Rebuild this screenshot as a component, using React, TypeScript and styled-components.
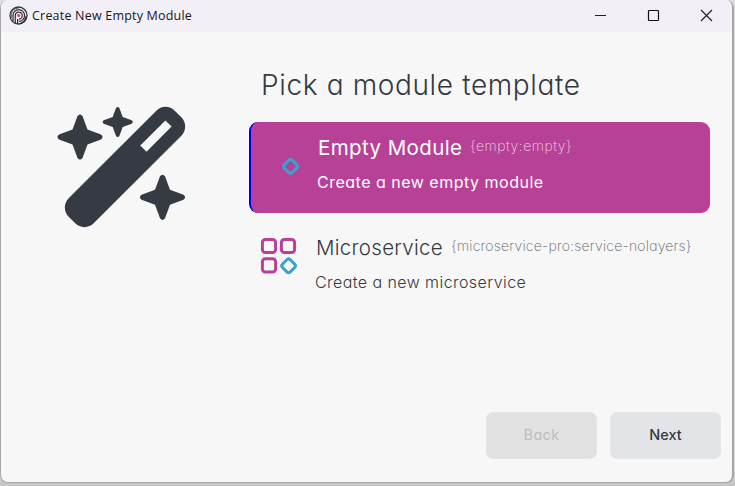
import React from "react";
import styled, { createGlobalStyle } from "styled-components";

const GlobalStyle = createGlobalStyle`
  * { box-sizing: border-box; }
  html, body { margin: 0; height: 486px; overflow: hidden; }
  body { background: #c9c9c9; font-family: Inter, "Liberation Sans", sans-serif; font-feature-settings: "cv11"; font-optical-sizing: none; }
`;

const Desktop = styled.div`
  width: 735px;
  height: 486px;
  padding: 0 1px 3px 0;
  background: linear-gradient(#dedede, #dedede 470px, #c6c6c6 482px);
`;
const Window = styled.div`
  height: 483px;
  border: 1px solid #a6a6a6;
  border-top: 0;
  border-right-width: 2px;
  border-bottom-width: 1px;
  border-radius: 8px;
  overflow: hidden;
  background: #f7f7f7;
`;
const TitleBar = styled.header`
  height: 32px;
  display: flex;
  align-items: center;
  background: #f2eff7;
  padding: 0 0 1px 8px;
  color: #17171a;
`;
const WindowTitle = styled.span`
  margin-left: 4px;
  flex: 1;
  font: 12.5px/18px "Open Sans", sans-serif;
  letter-spacing: 0.2px;
  padding-top: 1px;
  white-space: nowrap;
`;
const WindowControls = styled.div`
  display: flex;
  gap: 40px;
  padding-right: 19px;
`;
const Body = styled.main`
  height: 380px;
  display: grid;
  grid-template-columns: 248px 461px;
`;
const Illustration = styled.div`
  padding: 73px 0 0 55px;
`;
const Heading = styled.h1`
  margin: 35px 0 19px 12px;
  height: 36px;
  font-size: 28px;
  line-height: 36px;
  font-weight: 300;
  color: #343a40;
  white-space: nowrap;
  letter-spacing: 0.64px;
`;
const Option = styled.div<{ $selected?: boolean }>`
  height: 91px;
  margin-bottom: 9px;
  display: grid;
  grid-template-columns: ${p => (p.$selected ? "67px 1fr" : "65px 1fr")};
  border-left: 2px solid ${p => (p.$selected ? "#0000ff" : "transparent")};
  border-radius: 9px;
  background: ${p => (p.$selected ? "#b74196" : "transparent")};
  color: ${p => (p.$selected ? "#fff" : "#343a40")};
`;
const OptionIcon = styled.div<{ $selected?: boolean }>`
  padding: ${p => (p.$selected ? "35px 0 0 30px" : "15px 0 0 9px")};
`;
const OptionTop = styled.div`
  display: flex;
  padding-top: 12px;
  white-space: nowrap;
`;
const Name = styled.span<{ $width: number; $spacing: number; $selected?: boolean }>`
  width: ${p => p.$width}px;
  font-size: 20.5px;
  line-height: 28px;
  letter-spacing: ${p => p.$spacing}px;
  font-weight: ${p => (p.$selected ? 400 : 300)};
`;
const Code = styled.span<{ $selected?: boolean; $spacing: number }>`
  font-size: 14px;
  line-height: 24px;
  font-weight: 200;
  letter-spacing: ${p => p.$spacing}px;
  color: ${p => (p.$selected ? "#f0d3e7" : "#606468")};
`;
const Description = styled.div<{ $selected?: boolean; $spacing: number }>`
  margin: 8px 0 0 -1px;
  font-size: 16px;
  line-height: 24px;
  letter-spacing: ${p => p.$spacing}px;
  font-weight: ${p => (p.$selected ? 400 : 330)};
  white-space: nowrap;
`;
const Footer = styled.footer`
  display: flex;
  justify-content: flex-end;
  gap: 13px;
  padding-right: 11px;
`;
const Button = styled.button`
  width: 111px;
  height: 47px;
  padding: 0 0 2px;
  border: 1px solid #e5e6e9;
  border-radius: 7px;
  background: #e2e4e8;
  color: #343a40;
  font: 500 14.5px/20px Inter, sans-serif;
  font-feature-settings: "cv11";
  &:disabled { background: #e1e1e1; border-color: #e5e5e5; color: #bbbdbe; font-weight: 400; letter-spacing: 0.3px; }
`;

const AppLogo = () => (
  <svg width="19" height="19" viewBox="0 0 19 19" fill="none" stroke="#34343a" strokeWidth="1.25">
    <circle cx="9.5" cy="9.5" r="8.5" strokeWidth="1.3" />
    <path d="M4 15V9.5a5.8 5.8 0 1 1 5.8 5.8" />
    <path d="M6.3 17V9.5a3.5 3.5 0 1 1 3.5 3.5" />
    <path d="M2.3 12V8.5C3 4 6 2.2 9.5 2.2" strokeWidth=".8" />
    <path d="M8.6 17.8V13M11.5 17.3q5-1.8 5.4-7" />
    <circle cx="9.7" cy="9.4" r="1.7" fill="#d348a8" stroke="none" />
  </svg>
);

const Wand = () => (
  <svg width="132" height="124" viewBox="56 105 132 124" fill="#363b43">
    <g transform="translate(125 167) rotate(-45)">
      <rect x="-75" y="-17.7" width="150" height="35.4" rx="13" />
      <rect x="26" y="-4.4" width="35.5" height="8.8" fill="#f7f7f7" />
    </g>
    <Star x={80} y={137} scale={1} />
    <Star x={117.7} y={122} scale={0.667} />
    <Star x={162.5} y={197.3} scale={1} />
  </svg>
);
const Star = ({ x, y, scale }: { x: number; y: number; scale: number }) => (
  <path
    transform={`translate(${x} ${y}) scale(${scale})`}
    d="M-2.5-21Q0-24.2 2.5-21L7.5-7.5L21-2.5Q24.2 0 21 2.5L7.5 7.5L2.5 21Q0 24.2-2.5 21L-7.5 7.5L-21 2.5Q-24.2 0-21-2.5L-7.5-7.5Z"
  />
);
const Diamond = () => (
  <svg width="19" height="19" viewBox="0 0 19 19">
    <rect x="4" y="3.9" width="11" height="11" rx="2.4" fill="none" stroke="#3ba1ce" strokeWidth="3.1" transform="rotate(45 9.5 9.4)" />
  </svg>
);
const ServiceGrid = () => (
  <svg width="38" height="38" viewBox="0 0 38 38" fill="none" stroke="#b74196" strokeWidth="3">
    <rect x="2.4" y="2.4" width="13.2" height="13.2" rx="3" />
    <rect x="21.4" y="2.4" width="13.2" height="13.2" rx="3" />
    <rect x="2.4" y="21.8" width="13.2" height="13.2" rx="3" />
    <rect x="23.1" y="23.3" width="11" height="11" rx="2.4" stroke="#3ba1ce" transform="rotate(45 28.6 28.8)" />
  </svg>
);

export default function App() {
  return (
    <Desktop>
      <GlobalStyle />
      <Window>
        <TitleBar>
          <AppLogo />
          <WindowTitle>Create New Empty Module</WindowTitle>
          <WindowControls>
            <svg width="13" height="13" viewBox="0 0 13 13"><path d="M1 6.5h11" stroke="#222" /></svg>
            <svg width="13" height="13" viewBox="0 0 13 13"><rect x="1.5" y="1.5" width="10" height="10" rx=".7" fill="none" stroke="#111" strokeWidth="1.2" /></svg>
            <svg width="13" height="13" viewBox="0 0 13 13"><path d="m1 1 11 11M12 1 1 12" stroke="#222" strokeWidth="1.2" /></svg>
          </WindowControls>
        </TitleBar>
        <Body>
          <Illustration><Wand /></Illustration>
          <section>
            <Heading>Pick a module template</Heading>
            <Option $selected>
              <OptionIcon $selected><Diamond /></OptionIcon>
              <div>
                <OptionTop>
                  <Name $width={152} $spacing={0.4} $selected>Empty Module</Name>
                  <Code $spacing={0.5} $selected>{"{empty:empty}"}</Code>
                </OptionTop>
                <Description $spacing={0.5} $selected>Create a new empty module</Description>
              </div>
            </Option>
            <Option>
              <OptionIcon><ServiceGrid /></OptionIcon>
              <div>
                <OptionTop>
                  <Name $width={135} $spacing={0.28}>Microservice</Name>
                  <Code $spacing={0.22}>{"{microservice-pro:service-nolayers}"}</Code>
                </OptionTop>
                <Description $spacing={0.43}>Create a new microservice</Description>
              </div>
            </Option>
          </section>
        </Body>
        <Footer>
          <Button disabled>Back</Button>
          <Button>Next</Button>
        </Footer>
      </Window>
    </Desktop>
  );
}
